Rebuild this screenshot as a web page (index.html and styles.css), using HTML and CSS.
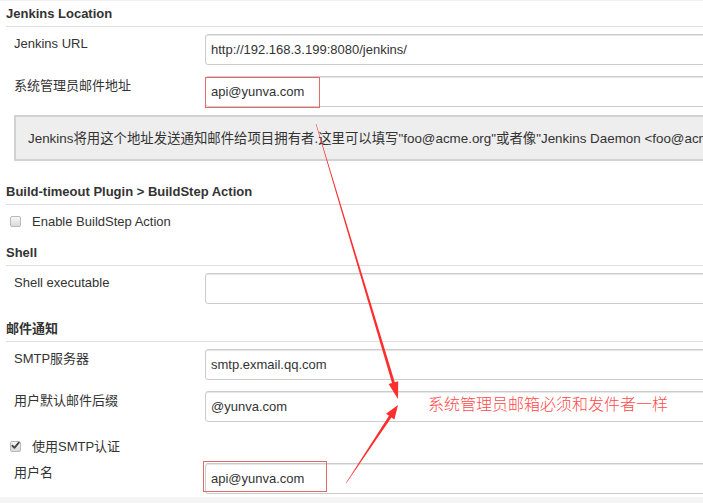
FILE: index.html
```html
<!DOCTYPE html>
<html lang="zh-CN">
<head>
<meta charset="utf-8">
<title>Jenkins 配置</title>
<link rel="stylesheet" href="styles.css">
</head>
<body>
<div class="page">
  <div class="topbar"></div>

  <h3 class="sec-title first">Jenkins Location</h3>
  <div class="row">
    <label class="lbl">Jenkins URL</label>
    <input class="inp" type="text" value="http://192.168.3.199:8080/jenkins/">
  </div>
  <div class="row gap">
    <label class="lbl">系统管理员邮件地址</label>
    <input class="inp" type="text" value="api@yunva.com">
  </div>
  <div class="help"><span class="help-text">Jenkins将用这个地址发送通知邮件给项目拥有者.这里可以填写"foo@acme.org"或者像"Jenkins Daemon &lt;foo@acme</span></div>

  <h3 class="sec-title after-help">Build-timeout Plugin &gt; BuildStep Action</h3>
  <div class="check-row plain">
    <span class="cb"></span>
    <span class="cb-text">Enable BuildStep Action</span>
  </div>

  <h3 class="sec-title">Shell</h3>
  <div class="row">
    <label class="lbl">Shell executable</label>
    <input class="inp" type="text" value="">
  </div>

  <h3 class="sec-title after-input">邮件通知</h3>
  <div class="row">
    <label class="lbl">SMTP服务器</label>
    <input class="inp" type="text" value="smtp.exmail.qq.com">
  </div>
  <div class="row gap">
    <label class="lbl">用户默认邮件后缀</label>
    <input class="inp" type="text" value="@yunva.com">
  </div>
  <div class="check-row auth">
    <span class="cb checked">
      <svg viewBox="0 0 11 11" width="11" height="11"><path d="M2.3 5.6 L4.4 7.9 L8.8 2.6" fill="none" stroke="#444" stroke-width="1.8" stroke-linecap="round" stroke-linejoin="round"/></svg>
    </span>
    <span class="cb-text">使用SMTP认证</span>
  </div>
  <div class="row">
    <label class="lbl">用户名</label>
    <input class="inp" type="text" value="api@yunva.com">
  </div>
  <div class="bottom-strip"></div>
</div>

<div class="mark mark-email"></div>
<div class="mark mark-user"></div>

<svg class="arrows" width="703" height="503" viewBox="0 0 703 503">
  <polygon points="315.8,124 316.3,124 394.8,382.3 398.2,381.3 398,399 388.6,384.1 392.0,383.1" fill="#ff2e2e"/>
  <polygon points="346.3,483.3 345.9,483 389.0,415.8 386.0,413.8 398,405 394.4,419.4 391.4,417.4" fill="#ff2e2e"/>
</svg>
<div class="note">系统管理员邮箱必须和发件者一样</div>
</body>
</html>
```

FILE: styles.css
```css
html, body {
  margin: 0;
  padding: 0;
  background: #ffffff;
  overflow: hidden;
}

body {
  width: 703px;
  height: 503px;
  position: relative;
  font-family: "Liberation Sans", Arial, "Noto Sans CJK SC", sans-serif;
  font-size: 13px;
  color: #333333;
}

.page {
  width: 780px;
  display: flex;
  flex-direction: column;
}

.topbar {
  height: 1px;
  background: #f0f0f0;
}

.sec-title {
  margin: 0 0 0 6px;
  padding: 2px 0 1px 0;
  line-height: 22px;
  font-size: 13px;
  font-weight: bold;
  color: #333333;
  border-bottom: 1px solid #dedede;
}

.sec-title.after-help { margin-top: 18px; }
.sec-title.after-input { margin-top: 12px; }

.row {
  display: flex;
  align-items: flex-start;
  margin: 7px 0 0 6px;
}

.row.gap { margin-top: 11px; }

.lbl {
  width: 191px;
  flex: none;
  padding: 2px 0 0 8px;
  line-height: 15px;
  color: #333333;
}

.inp {
  flex: 1;
  box-sizing: border-box;
  height: 31px;
  margin: 0;
  padding: 0 5px;
  font-family: "Liberation Sans", Arial, "Noto Sans CJK SC", sans-serif;
  font-size: 13px;
  color: #333333;
  background: #ffffff;
  border: 1px solid #cccccc;
  border-radius: 3px;
  box-shadow: inset 0 1px 1px rgba(0, 0, 0, 0.1);
  outline: none;
}

.help {
  margin: 8px 0 0 14px;
  height: 46px;
  box-sizing: border-box;
  padding: 0 0 0 12px;
  display: flex;
  align-items: center;
  white-space: nowrap;
  background: #eeeeee;
  border: 2px solid #d2d2d2;
  color: #333333;
  line-height: 15px;
}

.help-text {
  font-size: 13.4px;
}

.check-row {
  display: flex;
  align-items: flex-start;
  margin-left: 10px;
  box-sizing: border-box;
}

.check-row.plain {
  height: 35px;
  padding-top: 9px;
}

.check-row.auth {
  height: 34px;
  padding-top: 17px;
}

.cb {
  width: 11px;
  height: 11px;
  flex: none;
  box-sizing: border-box;
  margin-top: 2px;
  border: 1px solid #b9b9b9;
  border-radius: 2px;
  background: linear-gradient(#f6f6f6, #dadada);
  position: relative;
}

.cb svg {
  position: absolute;
  left: -1px;
  top: -2px;
}

.cb-text {
  margin-left: 11px;
  line-height: 15px;
  color: #333333;
}

.bottom-strip {
  margin-top: 3px;
  height: 10px;
  background: #f4f4f4;
}

.mark {
  position: absolute;
  border: 1px solid #e36a6a;
  box-sizing: border-box;
}

.mark-email {
  left: 205px;
  top: 77px;
  width: 115px;
  height: 31px;
}

.mark-user {
  left: 203px;
  top: 461px;
  width: 124px;
  height: 31px;
}

.arrows {
  position: absolute;
  left: 0;
  top: 0;
}

.note {
  position: absolute;
  left: 428px;
  top: 393px;
  font-family: "Noto Sans CJK SC", sans-serif;
  font-size: 16px;
  line-height: 20px;
  font-weight: 300;
  color: #ff4a4a;
  letter-spacing: 0;
  white-space: nowrap;
}
```
